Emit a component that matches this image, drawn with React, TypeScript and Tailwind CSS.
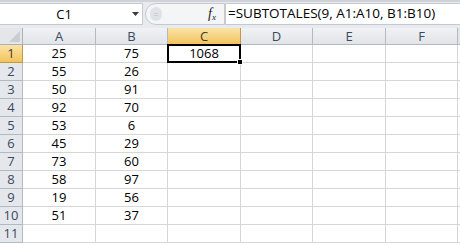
import React from "react";

const cols = ["A", "B", "C", "D", "E", "F"];
const data: [number, number][] = [
  [25, 75],
  [55, 26],
  [50, 91],
  [92, 70],
  [53, 6],
  [45, 29],
  [73, 60],
  [58, 97],
  [19, 56],
  [51, 37],
];

const font = { fontFamily: '"Open Sans", "Liberation Sans", sans-serif' };

const App = () => {
  return (
    <div className="w-[460px] h-[245px] overflow-hidden bg-white text-[12px] text-black" style={font}>
      {/* Formula bar */}
      <div className="h-[28px] bg-[#e7eaee] border-t-2 border-[#cfd3d8] flex items-start pt-[1px]">
        <div className="w-[143px] h-[22px] bg-white border border-[#c6cad0] border-l-0 flex items-center">
          <div className="w-[128px] text-center text-[13px] leading-none">C1</div>
          <svg width="8" height="5" viewBox="0 0 8 5" className="ml-[4px]">
            <path d="M0 0 H7 L3.5 4 Z" fill="#3b3b3b" />
          </svg>
        </div>
        <div className="ml-[2px] w-[80px] h-[22px] rounded-l-[11px] border border-[#c6cad0] bg-[#f3f5f7] flex items-center">
          <div className="ml-[4px] w-[12px] h-[14px] rounded-full bg-[#dfe3e8] flex items-center justify-center text-[#b9bec5] text-[9px] leading-none">=</div>
          <div className="flex-1" />
          <span className="mr-[8px] italic text-[14px] leading-none text-[#222]" style={{ fontFamily: '"Liberation Serif", serif' }}>
            f<sub className="text-[9px]">x</sub>
          </span>
        </div>
        <div className="flex-1 h-[22px] bg-white border border-[#c6cad0] border-r-0 flex items-center pl-[2px] text-[13.5px] leading-none">
          =SUBTOTALES(9, A1:A10, B1:B10)
        </div>
      </div>

      {/* Grid */}
      <div className="grid grid-cols-[23px_73px_72px_73px_72px_73px_72px_2px] grid-rows-[17px_repeat(11,18px)]">
        {/* corner */}
        <div className="relative bg-[#e4e6ea] border-r border-b border-[#a9b1bb]">
          <div className="absolute right-[2px] bottom-[2px] w-0 h-0 border-l-[11px] border-l-transparent border-b-[11px] border-b-[#c9ced5]" />
        </div>
        {cols.map((c) =>
          c === "C" ? (
            <div
              key={c}
              className="flex items-center justify-center bg-gradient-to-b from-[#fbe3a6] to-[#f2c35b] border-r border-b border-[#c29a43] text-[#3f3a2c] text-[13px] leading-none"
            >
              {c}
            </div>
          ) : (
            <div
              key={c}
              className="flex items-center justify-center bg-gradient-to-b from-[#f1f2f4] to-[#e1e4e8] border-r border-b border-[#b3b9c1] text-[#3b4a5e] text-[13px] leading-none"
            >
              {c}
            </div>
          )
        )}
        <div className="bg-[#e1e4e8] border-b border-[#b3b9c1]" />

        {Array.from({ length: 11 }).map((_, r) => {
          const row = data[r];
          return (
            <React.Fragment key={r}>
              {r === 0 ? (
                <div className="flex items-center justify-center bg-gradient-to-b from-[#fbe3a6] to-[#f2c35b] border-r border-b border-[#c29a43] text-[#3f3a2c] text-[13px] leading-none">
                  1
                </div>
              ) : (
                <div className="flex items-center justify-center bg-[#e4e7ec] border-r border-b border-[#b3b9c1] text-[#3b4a5e] text-[13px] leading-none">
                  {r + 1}
                </div>
              )}
              <div className="flex items-center justify-center border-r border-b border-[#d6d6d6] text-[13px] leading-none">
                {row ? row[0] : ""}
              </div>
              <div className="flex items-center justify-center border-r border-b border-[#d6d6d6] text-[13px] leading-none">
                {row ? row[1] : ""}
              </div>
              {r === 0 ? (
                <div className="relative flex items-center justify-center border-r border-b border-[#d6d6d6] text-[13px] leading-none">
                  <div className="absolute -left-[1px] -top-[1px] -right-[1px] -bottom-[1px] border-2 border-black" />
                  <div className="absolute -right-[3px] -bottom-[3px] w-[6px] h-[6px] bg-black border border-white" />
                  1068
                </div>
              ) : (
                <div className="border-r border-b border-[#d6d6d6]" />
              )}
              <div className="border-r border-b border-[#d6d6d6]" />
              <div className="border-r border-b border-[#d6d6d6]" />
              <div className="border-r border-b border-[#d6d6d6]" />
              <div className="border-b border-[#d6d6d6]" />
            </React.Fragment>
          );
        })}
      </div>
    </div>
  );
};

export default App;
